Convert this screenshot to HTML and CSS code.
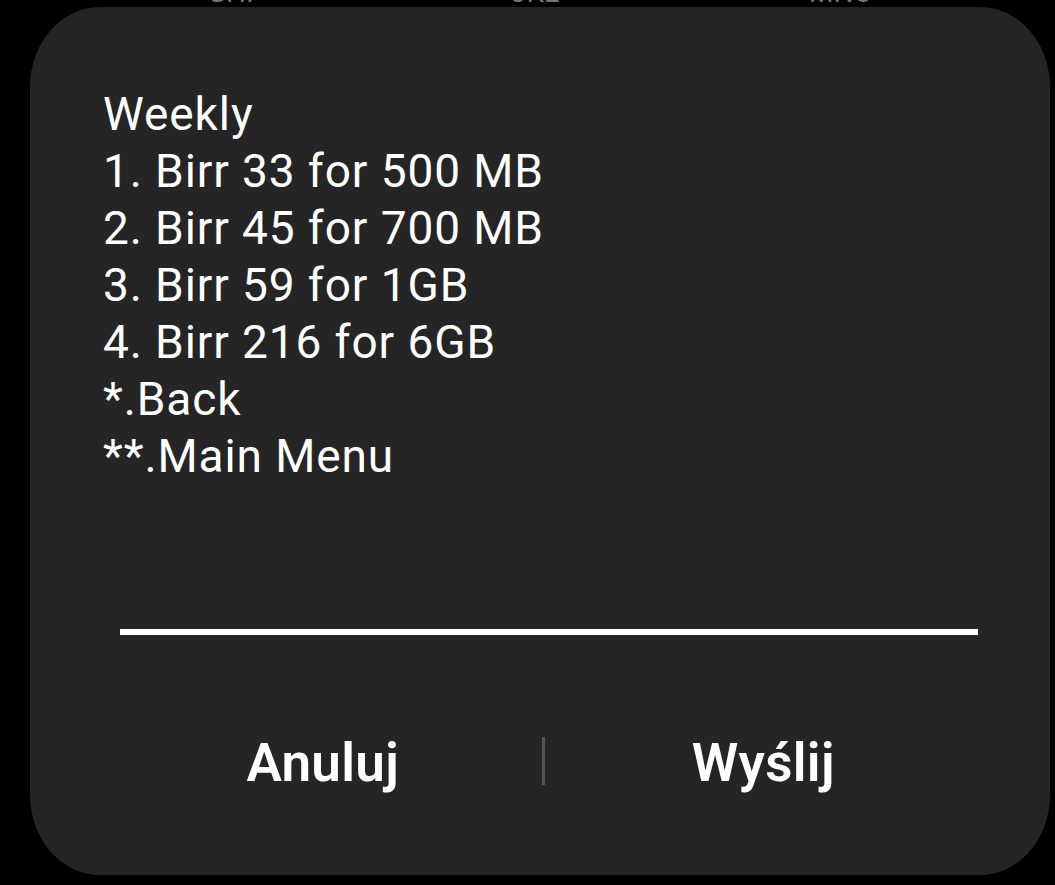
FILE: index.html
```html
<!DOCTYPE html>
<html lang="pl">
<head>
	<meta charset="UTF-8">
	<title>USSD</title>
	<link rel="stylesheet" href="styles.css">
</head>
<body>
	<div class="keys">
		<span>GHI</span>
		<span>JKL</span>
		<span>MNO</span>
	</div>
	<div class="dialog">
		<div class="message">
			Weekly<br>
			1. Birr 33 for 500 MB<br>
			2. Birr 45 for 700 MB<br>
			3. Birr 59 for 1GB<br>
			4. Birr 216 for 6GB<br>
			*.Back<br>
			**.Main Menu
		</div>
		<div class="field"></div>
		<div class="buttons">
			<a href="javascript:void(0)" class="btn">Anuluj</a>
			<span class="sep"></span>
			<a href="javascript:void(0)" class="btn">Wyślij</a>
		</div>
	</div>
</body>
</html>
```

FILE: styles.css
```css
html,body{
	margin: 0;
	padding: 0;
	background: #000;
}
body{
	height: 885px;
	overflow: hidden;
	font-family: Roboto, "Noto Sans", sans-serif;
	color: #fff;
}
a{
	color: #fff;
	text-decoration: none;
}
.keys{
	display: flex;
	height: 7px;
	overflow: hidden;
	align-items: flex-end;
	padding-left: 207px;
}
.keys span{
	display: block;
	font-size: 28px;
	line-height: 1;
	color: #777;
}
.keys span:nth-child(1){
	width: 304px;
}
.keys span:nth-child(2){
	width: 298px;
}
.dialog{
	margin-left: 30px;
	width: 1020px;
	height: 868px;
	background: #252525;
	border-radius: 70px / 80px;
	box-sizing: border-box;
	padding-top: 79px;
}
.message{
	padding-left: 73px;
	font-size: 46px;
	line-height: 57px;
	letter-spacing: 0.9px;
}
.field{
	margin: 144px 72px 0 90px;
	height: 6px;
	background: #fff;
}
.buttons{
	display: flex;
	align-items: center;
	margin: 102px 0 0 74px;
	width: 878px;
	height: 48px;
}
.btn{
	flex: 1;
	text-align: center;
	font-size: 53px;
	font-weight: 600;
	line-height: 48px;
	padding-top: 4px;
	letter-spacing: 0.3px;
}
.sep{
	width: 3px;
	height: 48px;
	background: #555;
}
```
